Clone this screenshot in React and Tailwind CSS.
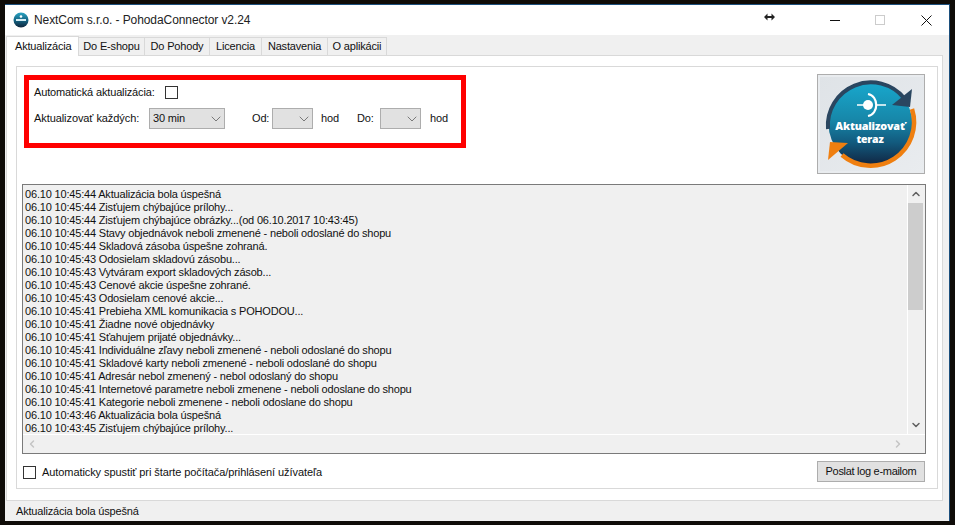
import React from 'react';
import { ChevronDown, ChevronUp, ChevronLeft, ChevronRight } from 'lucide-react';

const tabs = [
  { label: 'Do E-shopu', width: 'w-[66px]' },
  { label: 'Do Pohody', width: 'w-[65px]' },
  { label: 'Licencia', width: 'w-[52px]' },
  { label: 'Nastavenia', width: 'w-[66px]' },
  { label: 'O aplikácii', width: 'w-[59px]' },
];

const logLines = [
  '06.10 10:45:44 Aktualizácia bola úspešná',
  '06.10 10:45:44 Zisťujem chýbajúce prílohy...',
  '06.10 10:45:44 Zisťujem chýbajúce obrázky...(od 06.10.2017 10:43:45)',
  '06.10 10:45:44 Stavy objednávok neboli zmenené - neboli odoslané do shopu',
  '06.10 10:45:44 Skladová zásoba úspešne zohraná.',
  '06.10 10:45:43 Odosielam skladovú zásobu...',
  '06.10 10:45:43 Vytváram export skladových zásob...',
  '06.10 10:45:43 Cenové akcie úspešne zohrané.',
  '06.10 10:45:43 Odosielam cenové akcie...',
  '06.10 10:45:41 Prebieha XML komunikacia s POHODOU...',
  '06.10 10:45:41 Žiadne nové objednávky',
  '06.10 10:45:41 Sťahujem prijaté objednávky...',
  '06.10 10:45:41 Individuálne zľavy neboli zmenené - neboli odoslané do shopu',
  '06.10 10:45:41 Skladové karty neboli zmenené - neboli odoslané do shopu',
  '06.10 10:45:41 Adresár nebol zmenený - nebol odoslaný do shopu',
  '06.10 10:45:41 Internetové parametre neboli zmenene - neboli odoslane do shopu',
  '06.10 10:45:41 Kategorie neboli zmenene - neboli odoslane do shopu',
  '06.10 10:43:46 Aktualizácia bola úspešná',
  '06.10 10:43:45 Zisťujem chýbajúce prílohy...',
];

function AppIcon() {
  return (
    <svg width="16" height="16" viewBox="0 0 16 16" className="shrink-0">
      <defs>
        <linearGradient id="appIconFill" x1="0" y1="0" x2="0" y2="1">
          <stop offset="0" stopColor="#2aa5c4" />
          <stop offset="0.55" stopColor="#14607f" />
          <stop offset="1" stopColor="#10263c" />
        </linearGradient>
      </defs>
      <circle cx="8" cy="8" r="7.5" fill="url(#appIconFill)" />
      <rect x="3" y="7" width="10" height="2" fill="#d6eef5" />
      <circle cx="8" cy="4.5" r="1.3" fill="#ffffff" />
    </svg>
  );
}

function UpdateBadge() {
  return (
    <svg width="104" height="94" viewBox="0 0 104 94">
      <defs>
        <linearGradient id="badgeBack" x1="0" y1="0" x2="1" y2="1">
          <stop offset="0" stopColor="#dfe3e7" />
          <stop offset="1" stopColor="#e9ecef" />
        </linearGradient>
        <linearGradient id="badgeFill" x1="0" y1="0" x2="0" y2="1">
          <stop offset="0" stopColor="#18a8cd" />
          <stop offset="0.45" stopColor="#1787a9" />
          <stop offset="0.72" stopColor="#125a7e" />
          <stop offset="1" stopColor="#11233f" />
        </linearGradient>
      </defs>
      <rect width="104" height="94" fill="url(#badgeBack)" />
      <circle cx="50.5" cy="47" r="42" fill="url(#badgeFill)" />
      <path d="M 8 52 A 43 43 0 0 1 84 21" fill="none" stroke="#2a4660" strokeWidth="4" />
      <path d="M 92 32 A 43.5 43.5 0 0 1 22 78" fill="none" stroke="#ef7f10" strokeWidth="4.5" />
      <path d="M 92 12 L 90 30 L 72 28 Z" fill="#2a4660" />
      <path d="M 8 83 L 10 65 L 28 66 Z" fill="#ef7f10" />
      <circle cx="48" cy="28" r="5" fill="#ffffff" />
      <path d="M 37 28 H 44 M 57 28 H 66" stroke="#ffffff" strokeWidth="1.6" fill="none" />
      <path d="M 48 17 C 59 19 59 37 48 39" stroke="#ffffff" strokeWidth="2.2" fill="none" />
      <text x="50" y="53" textAnchor="middle" fontFamily="Open Sans, sans-serif" fontWeight="800" fontSize="10.8" fill="#ffffff">
        Aktualizovať
      </text>
      <text x="50" y="66" textAnchor="middle" fontFamily="Open Sans, sans-serif" fontWeight="800" fontSize="10.5" fill="#ffffff">
        teraz
      </text>
    </svg>
  );
}

function Checkbox() {
  return <div className="w-[13px] h-[13px] border border-[#333333] bg-white shrink-0" />;
}

function Combo({ value, width }) {
  return (
    <div className={`${width} h-[21px] border border-[#adadad] bg-[#e1e1e1] flex items-center justify-between pl-[3px] shrink-0`}>
      <span>{value}</span>
      <ChevronDown size={16} strokeWidth={1} className="text-[#444444]" />
    </div>
  );
}

export default function App() {
  return (
    <div className="w-[955px] h-[525px] bg-[#0f0c08] pt-[4px] pl-[5px] pr-[5px] pb-[4px] text-[11px] leading-[13px] tracking-[-0.18px] text-[#111111] font-['Liberation_Sans',Arial,sans-serif] overflow-hidden whitespace-nowrap">
      <div className="relative h-full flex flex-col bg-white border-t border-r border-[#1c4f7c]">
        {/* title bar */}
        <div className="h-[30px] shrink-0 flex items-center pl-[8px] bg-white">
          <AppIcon />
          <span className="ml-[5px] text-[12px] text-[#222222] tracking-[-0.08px]">NextCom s.r.o. - PohodaConnector v2.24</span>
          <div className="ml-auto flex items-center">
            <svg width="11" height="8" viewBox="0 0 11 8" className="mr-[55px] mb-[7px]">
              <path d="M0 4 L3.5 0.5 V3 H7.5 V0.5 L11 4 L7.5 7.5 V5 H3.5 V7.5 Z" fill="#222222" />
            </svg>
            <div className="w-[10px] h-px bg-[#111111] mr-[35px]" />
            <div className="w-[10px] h-[10px] border border-[#cccccc] mr-[36px]" />
            <svg width="11" height="11" viewBox="0 0 11 11" className="mr-[17px]">
              <path d="M0.5 0.5 L10.5 10.5 M10.5 0.5 L0.5 10.5" stroke="#111111" strokeWidth="1" />
            </svg>
          </div>
        </div>

        {/* client area */}
        <div className="flex-1 flex flex-col bg-[#f0f0f0] pl-[1px] pr-[6px]">
          <div className="h-[20px] flex items-end shrink-0">
            <div className="w-[73px] h-[20px] bg-white border-t border-l border-r border-[#d9d9d9] -mb-px relative flex items-center pl-[8px] pb-[1px]">
              Aktualizácia
            </div>
            {tabs.map(tab => (
              <div key={tab.label} className={`${tab.width} h-[18px] border-t border-r border-[#d9d9d9] flex items-center justify-center`}>
                {tab.label}
              </div>
            ))}
          </div>

          <div className="h-[446px] border border-[#d9d9d9] bg-white pt-[10px] pl-[9px] pr-[4px] pb-[11px]">
            <div className="h-full border border-[#d9d9d9] flex flex-col pt-[8px] pl-[5px] pr-[11px]">
              <div className="flex justify-between items-start h-[109px] pl-[2px] pr-px shrink-0">
                <div className="w-[442px] h-[73px] border-[5px] border-[#ff0000] pt-[5px] pl-[5px]">
                  <div className="flex items-center h-[14px]">
                    <span className="w-[131px] pt-px tracking-[-0.14px]">Automatická aktualizácia:</span>
                    <Checkbox />
                  </div>
                  <div className="flex items-center mt-[9px] h-[21px]">
                    <span className="w-[115px] tracking-[-0.08px]">Aktualizovať každých:</span>
                    <Combo value="30 min" width="w-[76px]" />
                    <span className="ml-[27px] w-[20px]">Od:</span>
                    <Combo value="" width="w-[41px]" />
                    <span className="ml-[8px] w-[19px]">hod</span>
                    <span className="ml-[17px] w-[23px]">Do:</span>
                    <Combo value="" width="w-[41px]" />
                    <span className="ml-[9px] w-[19px]">hod</span>
                  </div>
                </div>
                <div className="w-[108px] h-[100px] border border-[#adadad] bg-[#e9ecef] p-[2px] -mt-px">
                  <UpdateBadge />
                </div>
              </div>

              <div className="h-[270px] border border-[#7a7a7a] bg-[#f0f0f0] flex flex-col shrink-0">
                <div className="h-[250px] flex shrink-0 border-b border-white">
                  <div className="flex-1 min-w-0 pt-[3px] pl-[2px] overflow-hidden">
                    {logLines.map((line, i) => (
                      <div key={i} className="h-[13px]">{line}</div>
                    ))}
                  </div>
                  <div className="w-[18px] pr-[2px] flex flex-col items-center shrink-0 border-l border-white">
                    <div className="h-[18px] flex items-center justify-center shrink-0">
                      <ChevronUp size={12} strokeWidth={3} className="text-[#606060]" />
                    </div>
                    <div className="w-full h-[107px] bg-[#cdcdcd] shrink-0" />
                    <div className="flex-1" />
                    <div className="h-[18px] flex items-center justify-center shrink-0">
                      <ChevronDown size={12} strokeWidth={3} className="text-[#606060]" />
                    </div>
                  </div>
                </div>
                <div className="flex-1 flex items-center pl-[3px] pr-[3px]">
                  <ChevronLeft size={12} strokeWidth={3} className="text-[#c4c4c4]" />
                  <ChevronRight size={12} strokeWidth={3} className="ml-auto mr-[18px] text-[#c4c4c4]" />
                </div>
              </div>

              <div className="flex items-center justify-between mt-[7px] pl-px pr-px">
                <div className="flex items-center gap-[6px] pt-[2px]">
                  <Checkbox />
                  <span className="tracking-[-0.08px]">Automaticky spustiť pri štarte počítača/prihlásení užívateľa</span>
                </div>
                <button className="w-[108px] h-[21px] border border-[#adadad] bg-[#e1e1e1] text-center tracking-[-0.3px]">Poslat log e-mailom</button>
              </div>
            </div>
          </div>

          <div className="flex-1 flex items-end pl-[10px] pb-[3px]">Aktualizácia bola úspešná</div>
        </div>
      </div>
    </div>
  );
}
